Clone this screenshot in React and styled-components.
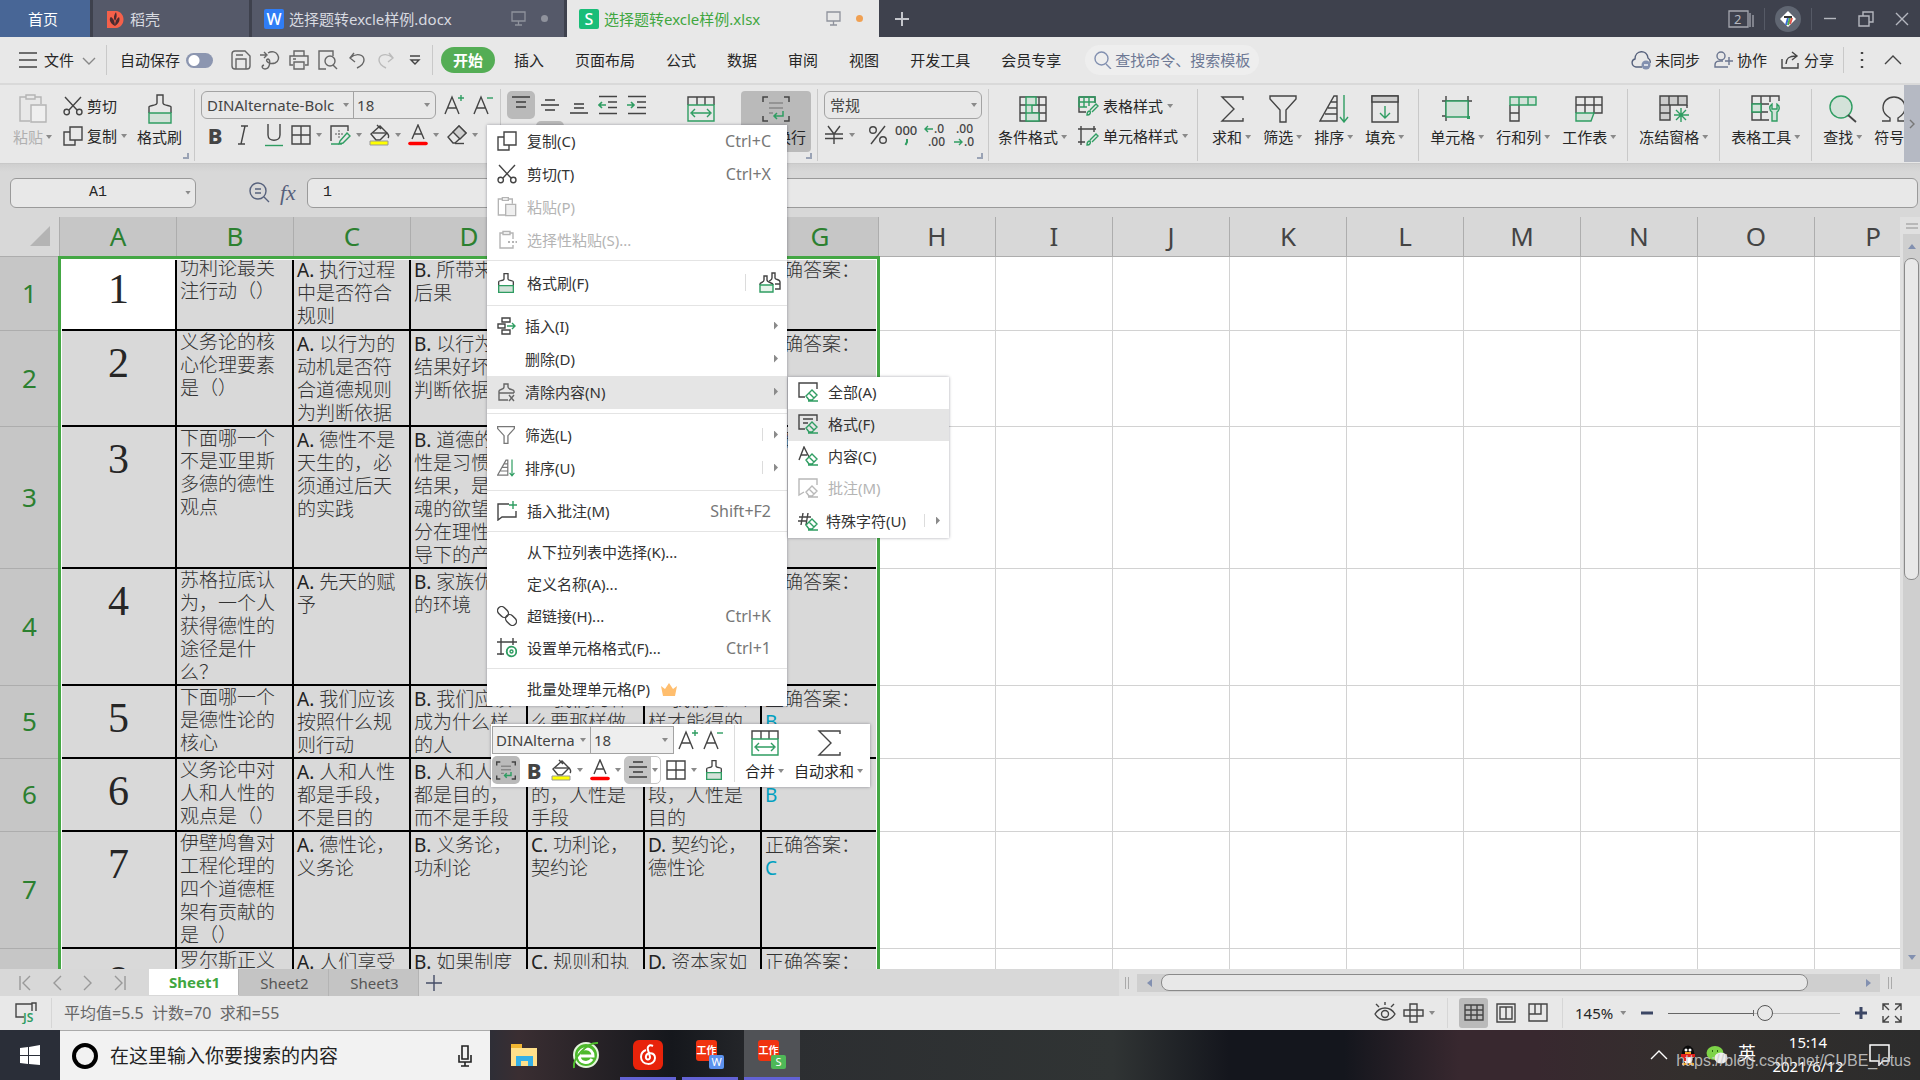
import React from 'react'
import styled, { createGlobalStyle, css } from 'styled-components'

const ink = '#444'
const green = '#2f9d62'
const mint = '#d3e2d9'
const uiFont = `'Noto Sans', 'Noto Sans CJK SC', sans-serif`

const GlobalStyle = createGlobalStyle`
  * {
    box-sizing: border-box;
  }

  body {
    margin: 0;
    overflow: hidden;
    background: #e8e8e8;
    color: #262626;
    font-family: ${uiFont};
    font-size: 15px;
    line-height: 20px;
  }

  button, input, select {
    margin: 0;
    padding: 0;
    border: 0;
    background: none;
    color: inherit;
    font: inherit;
    outline: none;
  }

  svg {
    display: block;
    flex: none;
  }
`

const Window = styled.div`
  position: relative;
  display: flex;
  flex-direction: column;
  height: 100vh;
  overflow: hidden;
`

const Spacer = styled.div`
  flex: 1;
`

const Gap = styled.span`
  flex: none;
  width: ${({ $width }) => $width}px;
`

const Caret = styled.span`
  flex: none;
  width: 6px;
  height: 4px;
  background: #8a8a8a;
  clip-path: polygon(0 0, 100% 0, 50% 100%);
`

const Divider = styled.span`
  flex: none;
  width: 1px;
  height: ${({ $height = 30 }) => $height}px;
  margin: 0 ${({ $gap = 0 }) => $gap}px;
  background: ${({ $color = '#c9c9c9' }) => $color};
`

/* ---------- icons ---------- */

const Icon = ({ w = 20, h = w, color = ink, sw = 1.4, children }) => (
  <svg
    width={w}
    height={h}
    viewBox={`0 0 ${w} ${h}`}
    fill='none'
    stroke={color}
    strokeWidth={sw}
    aria-hidden='true'
  >
    {children}
  </svg>
)

const Glyph = ({ x, y, size, children, fill = ink, weight = 400 }) => (
  <text
    x={x}
    y={y}
    fontSize={size}
    fill={fill}
    stroke='none'
    fontWeight={weight}
    fontFamily='Noto Sans'
  >
    {children}
  </text>
)

const PasteIcon = ({ small }) => (
  <svg
    width={small ? 20 : 28}
    height={small ? 20 : 30}
    viewBox='0 0 28 30'
    fill='none'
    stroke='#b4b4b4'
    strokeWidth={small ? 2 : 1.4}
    aria-hidden='true'
  >
    <path d='M7 3H1v24h10M16 3h6v7M7 1h9v4H7z' />
    <path d='M12 11h15v17H12z' fill='#efefef' />
  </svg>
)

const PasteSpecialIcon = () => (
  <Icon color='#b4b4b4'>
    <path d='M6 3H3v15h13v-3M13 3h3v6M6 1.500h7v3H6z' />
    <path d='M11 12h2M15 12h2M18.500 12h1.500' strokeWidth='2' />
  </Icon>
)

const CutIcon = () => (
  <Icon>
    <path d='M2 1l12 13M18 1L6 14' />
    <circle cx='3.700' cy='16' r='2.700' />
    <circle cx='16.300' cy='16' r='2.700' />
  </Icon>
)

const CopyIcon = () => (
  <Icon>
    <path d='M7 1h12v13H7z' />
    <path d='M7 6H1v13h11v-5' />
  </Icon>
)

const BrushIcon = ({ w = 24, h = 30 }) => (
  <svg
    width={w}
    height={h}
    viewBox='0 0 24 30'
    fill='none'
    stroke={ink}
    strokeWidth={w > 20 ? 1.4 : 2}
    aria-hidden='true'
  >
    <path d='M1 19v-6c0-2 8-1 8-4V1h6v8c0 3 8 2 8 4v6' />
    <path d='M1 19h22v10H1z' fill={mint} stroke={green} />
  </svg>
)

const DoubleBrushIcon = () => (
  <Icon w={22}>
    <path d='M10 9c2-1 3-1 3-3V1h3v5c0 2 5 1 5 4v7h-5M16 12h5' />
    <path d='M1 13v-1c0-2 4-1 4-4V4h3v4c0 3 6 2 6 5' fill='#fff' />
    <path d='M1 13h13v7H1z' fill='#e8f4ec' stroke={green} />
  </Icon>
)

const BordersIcon = () => (
  <Icon>
    <path d='M1 1h18v18H1zM10 1v18M1 10h18' />
  </Icon>
)

const CellStyleIcon = () => (
  <Icon w={21} h={20}>
    <path d='M1 16V1h17v5' />
    <path d='M5 9h8M9 5v8' strokeDasharray='2 1' stroke='#888' />
    <path d='M1 19h11M10 16l7-8 3 3-7 7-4 1z' stroke={green} />
  </Icon>
)

const FillIcon = () => (
  <Icon w={21} h={22}>
    <path d='M2 10l9-8 7 7-7 7H7zM8 1l4 4' />
    <path d='M4 9h14' />
    <path d='M18 9c2 2 2 4 1 5' />
    <path d='M1 17h18v4H1z' fill='#ff0' stroke='#999' strokeWidth='1' />
  </Icon>
)

const FontColorIcon = () => (
  <Icon w={20} h={22}>
    <path d='M4 15L10 1l6 14M6 10h8' />
    <path d='M2 19.500h16' stroke='#f00' strokeWidth='3.600' strokeLinecap='round' />
  </Icon>
)

const EraserIcon = () => (
  <Icon>
    <path d='M1 12L12 1l7 7L8 18H6z' />
    <path d='M6 7l7 7 6-6-7-7z' fill='#cfcfcf' />
    <path d='M8 18.500h9' />
  </Icon>
)

const FontSizeIcon = ({ minus }) => (
  <Icon w={21} h={22}>
    <path d='M1 20L8 3l7 17M4 14h8' />
    <path d={minus ? 'M14 4h6' : 'M14 4h6M17 1v6'} stroke={green} />
  </Icon>
)

const LinesIcon = ({ rows }) => (
  <Icon sw={1.6}>
    {rows.map(([x, y, width]) => (
      <path key={y} d={`M${x} ${y}h${width}`} />
    ))}
  </Icon>
)

const IndentIcon = ({ out }) => (
  <Icon sw={1.6}>
    <path d='M1 1.500h18M10 7h9M10 12.500h9M1 18.500h18' />
    <path
      d={out ? 'M8 10H1M4 7l-3 3 3 3' : 'M0 10h7M4 7l3 3-3 3'}
      stroke={green}
    />
  </Icon>
)

const MergeIcon = () => (
  <Icon w={28} h={26}>
    <path d='M1 9V1h26v8M10 1v8M18 1v8' />
    <path d='M1 9h26v16H1zM5 17h18M8 13l-4 4 4 4M20 13l4 4-4 4' stroke={green} />
  </Icon>
)

const WrapIcon = ({ w = 28, h = 26 }) => (
  <svg
    width={w}
    height={h}
    viewBox='0 0 28 26'
    fill='none'
    stroke={ink}
    strokeWidth={w > 20 ? 1.5 : 2}
    aria-hidden='true'
  >
    <path d='M6 1H1v5M22 1h5v5M6 25H1v-5M22 25h5v-5' />
    <path d='M7 7h14M7 12h14M7 17h4' stroke='#888' />
    <path d='M21 15v5h-9M15 17l-3 3 3 3' stroke={green} />
  </svg>
)

const YenIcon = () => (
  <Icon>
    <path d='M4 1l6 8 6-8M1 9h18M1 13.500h18M10 9v10' />
  </Icon>
)

const PercentIcon = () => (
  <Icon>
    <circle cx='5' cy='5' r='3.300' />
    <circle cx='15' cy='15' r='3.300' />
    <path d='M17 1L3 19' />
  </Icon>
)

const ThousandsIcon = () => (
  <Icon w={24} h={22}>
    <Glyph x='0' y='11' size='13' weight='500'>000</Glyph>
    <path d='M12 15v3l-1.500 3' stroke={green} strokeWidth='2' />
  </Icon>
)

const DecimalIcon = ({ more }) => (
  <Icon w={24} h={24}>
    <Glyph x={more ? 3 : 10} y='10' size='12' weight='500'>
      {more ? '.00' : '.0'}
    </Glyph>
    <Glyph x={more ? 11 : 4} y='23' size='12' weight='500'>
      {more ? '.0' : '.00'}
    </Glyph>
    <path
      d={more ? 'M1 19h8M6 16l3 3-3 3' : 'M9 6H1M4 3L1 6l3 3'}
      stroke={green}
    />
  </Icon>
)

const ConditionalIcon = () => (
  <Icon w={28} h={26}>
    <path d='M1 1h26v24H1zM1 9h26M1 17h26M20 1v24' />
    <path d='M7 1h10v8H7zM7 9h6v8H7zM7 17h13v8H7z' fill={mint} stroke={green} />
  </Icon>
)

const TableStyleIcon = () => (
  <Icon w={21} h={20}>
    <path d='M1 1h16v6M1 1v15h7' />
    <path d='M1 1h16v5H1zM1 11h8M6 1v10M11 1v9M1 6v5' stroke={green} />
    <path d='M9 19c0-3 1-4 3-4 1 2 0 4-3 4zM12 14l6-6 2 2-6 6' stroke={green} />
  </Icon>
)

const CellStylesIcon = () => (
  <Icon w={21} h={20}>
    <path d='M0 3h18M3 0v19M16 0v6M0 16h7' />
    <path d='M9 19c0-3 1-4 3-4 1 2 0 4-3 4zM12 14l6-6 2 2-6 6' stroke={green} />
  </Icon>
)

const SumIcon = () => (
  <Icon w={24} h={26}>
    <path d='M23 4V1H2l12 12L2 25h21v-3' />
  </Icon>
)

const FilterIcon = ({ w = 28, h = 28 }) => (
  <svg
    width={w}
    height={h}
    viewBox='0 0 28 28'
    fill='none'
    stroke={w > 20 ? ink : '#777'}
    strokeWidth={w > 20 ? 1.4 : 2}
    aria-hidden='true'
  >
    <path d='M1 1h26v3l-10 11v12h-6V15L1 4z' />
  </svg>
)

const SortIcon = ({ w = 30, h = 28 }) => (
  <svg
    width={w}
    height={h}
    viewBox='0 0 30 28'
    fill='none'
    stroke={w > 20 ? ink : '#777'}
    strokeWidth={w > 20 ? 1.4 : 2}
    aria-hidden='true'
  >
    <path d='M18 1v25H1L15 1zM9 13h9M6 19h12M12 7h6' />
    <path d='M25 0v27M21 22l4 5 4-5' stroke={green} />
  </svg>
)

const FillDownIcon = () => (
  <Icon w={28} h={28}>
    <path d='M1 1h26v26H1z' />
    <path d='M1 1h26v6H1z' fill='#ccc' />
    <path d='M14 11v12M9 18l5 5 5-5' stroke={green} />
  </Icon>
)

const CellsIcon = () => (
  <Icon w={30} h={26}>
    <path d='M0 5h30M0 20h5M4 0v25M26 0v20' />
    <path d='M4 5h22v16H4z' fill={mint} stroke={green} />
    <path d='M25 20h3v3h-3z' fill={green} stroke='none' />
  </Icon>
)

const RowColIcon = () => (
  <Icon w={28} h={26}>
    <path d='M1 9v16h9V9M1 17h9' />
    <path d='M1 1h26v8H1zM10 1v8M19 1v8' stroke={green} fill={mint} />
  </Icon>
)

const WorksheetIcon = () => (
  <Icon w={28} h={26}>
    <path d='M1 17V1h26v16h-9M1 9h26M10 1v16M19 1v16' />
    <path d='M1 17h18l-3 8H1z' fill={mint} stroke={green} />
  </Icon>
)

const FreezeIcon = () => (
  <Icon w={30} h={28}>
    <path d='M1 1h27v9H11v15H1z' fill='#ccc' />
    <path d='M10 1v9M19 1v9M1 10h10M1 18h10M28 10v3' />
    <path d='M22 13v14M15 20h15M17 15l10 10M27 15L17 25' stroke={green} />
  </Icon>
)

const TableToolIcon = () => (
  <Icon w={30} h={28}>
    <path d='M28 6V1H1v24h17M1 9h17M10 1v24M19 1v6M1 17h16' />
    <path d='M1 9h9v8H1z' fill={mint} stroke={green} />
    <path
      d='M21 9c-3 2-3 6 0 8v9h5v-9c3-2 3-6 0-8v5h-5z'
      fill={mint}
      stroke={green}
    />
  </Icon>
)

const FindIcon = () => (
  <Icon w={28} h={28}>
    <circle cx='12' cy='12' r='11' fill={mint} stroke={green} />
    <path d='M19 20l8 7' strokeWidth='1.800' />
  </Icon>
)

const OmegaIcon = () => (
  <Icon w={28} h={26}>
    <path d='M2 25h8v-3C5 19 3 16 3 12 3 5 8 1 14 1s11 4 11 11c0 4-2 7-7 10v3h8' />
  </Icon>
)

const ClearIcon = () => (
  <Icon color='#666'>
    <path d='M2 11V9c0-2 5-1 5-4V2h4v3c0 3 6 2 6 4v2M2 11v7h9M2 11h15' />
    <path d='M12 13l5 6M17 13l-5 6' />
  </Icon>
)

const InsertIcon = () => (
  <Icon>
    <path d='M5 2h8v4H5zM1 8h7v4H1zM5 14h8v4H5z' />
    <path d='M10 10h8M15 7l3 3-3 3' stroke={green} />
  </Icon>
)

const CommentIcon = () => (
  <Icon>
    <path d='M12 3H1v16l4-3h14v-6' />
    <path d='M12 4h8M16 0v8' stroke={green} />
  </Icon>
)

const LinkIcon = () => (
  <Icon>
    <rect x='-6' y='-4' width='12' height='8' rx='4' transform='translate(6 6) rotate(45)' />
    <rect x='-6' y='-4' width='12' height='8' rx='4' transform='translate(14 14) rotate(45)' />
  </Icon>
)

const FormatCellsIcon = () => (
  <Icon>
    <path d='M0 4h20M4 0v17M16 0v7M0 16h7' />
    <circle cx='14.500' cy='13.500' r='4.800' stroke={green} strokeWidth='1.800' />
    <circle cx='14.500' cy='13.500' r='1.500' stroke={green} />
  </Icon>
)

const EraseIcon = ({ kind, muted }) => {
  const stroke = muted ? '#b8b8b8' : ink
  const accent = muted ? '#b8b8b8' : green
  return (
    <Icon color={stroke}>
      {kind === 'box' && <path d='M19 7V1H1v14h6' />}
      {kind === 'format' && <path d='M19 7V1H1v14h6M5 5h10M5 9h5' />}
      {kind === 'text' && <path d='M1 14L6 1l5 10M3 9h6' />}
      {kind === 'note' && <path d='M19 7V1H1v16l5-3' />}
      {kind === 'hash' && <path d='M5 2L3 14M10 2L8 14M1 6h12M0 10h8' />}
      <path d='M8 14l6-6 5 5-5 5h-3zM11 11l5 5M10 19h10' stroke={accent} />
    </Icon>
  )
}

/* ---------- title bar ---------- */

const TitleBar = styled.header`
  display: flex;
  flex: none;
  height: 37px;
  background: #3e414d;
  color: #d8dae0;
`

const WindowTab = styled.button`
  display: flex;
  align-items: center;
  flex: none;
  gap: 5px;
  width: ${({ $width }) => $width}px;
  margin-right: 3px;
  padding: 0 16px 0 12px;
  background: #555969;
  text-align: left;

  ${({ $kind }) =>
    $kind === 'home' &&
    css`
      justify-content: center;
      background: #486696;
      color: #fff;
    `}
  ${({ $kind }) =>
    $kind === 'active' &&
    css`
      margin-right: 0;
      background: #e8e8e8;
      color: #40a640;
    `}
`

const AppBadge = styled.span`
  display: grid;
  place-items: center;
  width: 20px;
  height: 20px;
  border-radius: 2px;
  background: ${({ $color }) => $color};
  color: #fff;
  font-size: 16px;
  font-weight: 500;
`

const Dot = styled.span`
  width: 7px;
  height: 7px;
  margin-left: 10px;
  border-radius: 50%;
  background: ${({ $color }) => $color};
`

const NewTab = styled.button`
  display: grid;
  place-items: center;
  width: 46px;
`

const WindowControls = styled.div`
  display: flex;
  align-items: center;
  color: #c0c2ca;
`

const ControlButton = styled.button`
  display: grid;
  place-items: center;
  width: 36px;
  height: 36px;
`

const Avatar = styled.button`
  display: grid;
  place-items: center;
  width: 26px;
  height: 26px;
  border-radius: 50%;
  background: #606672;
`

const MonitorIcon = () => (
  <Icon w={15} h={15} color='#8f929c' sw={1.3}>
    <path d='M1 1h13v9H1zM7.500 10v4M4 14h7' />
  </Icon>
)

const TitleTabs = () => (
  <TitleBar>
    <WindowTab $width={90} $kind='home'>首页</WindowTab>
    <WindowTab $width={156}>
      <Icon w={20}>
        <path d='M2 2h9c10 1 10 16 0 17H2z' fill='#f5604a' stroke='none' />
        <path d='M10 17C4 14 4 9 6 8c2 1 4 4 4 9zM10 17c5-3 5-7 4-9-3 2-4 5-4 9zM10 12c-2-3-1-6 1-9 1 3 1 6-1 9z' fill='#4a2b30' stroke='none' />
      </Icon>
      稻壳
    </WindowTab>
    <WindowTab $width={312}>
      <AppBadge $color='#2f7df6'>W</AppBadge>
      选择题转excle样例.docx
      <Spacer />
      <MonitorIcon />
      <Dot $color='#8f929c' />
    </WindowTab>
    <WindowTab $width={312} $kind='active'>
      <AppBadge $color='#19bd78'>S</AppBadge>
      选择题转excle样例.xlsx
      <Spacer />
      <MonitorIcon />
      <Dot $color='#f0a052' />
    </WindowTab>
    <NewTab aria-label='新建'>
      <Icon w={18} color='#c4c6cc' sw={2}>
        <path d='M9 2v14M2 9h14' />
      </Icon>
    </NewTab>
    <Spacer />
    <WindowControls>
      <Icon w={26} h={20} color='#a5a7af' sw={1.3}>
        <path d='M1 2h19v16H1zM22 4v14M25 6v12' />
        <Glyph x='6' y='15' size='13' fill='#b5b7bf'>2</Glyph>
      </Icon>
      <Divider $height={22} $gap={10} $color='#565a66' />
      <Avatar aria-label='账号'>
        <Icon w={18} sw={2}>
          <path d='M9 1l8 8-8 8-8-8z' fill='#fff' stroke='none' />
          <path d='M7 15l2-7' stroke='#3b6ad8' />
          <path d='M9 15l2-7' stroke='#4cae4c' />
          <path d='M11 14l2-6' stroke='#e0524a' />
          <path d='M5 7h8' stroke='#333' />
        </Icon>
      </Avatar>
      <Gap $width={10} />
      <Divider $height={22} $color='#565a66' />
      <ControlButton aria-label='最小化'>
        <Icon w={14} color='#b5b7bf'><path d='M1 6.500h12' /></Icon>
      </ControlButton>
      <ControlButton aria-label='还原'>
        <Icon w={16} color='#b5b7bf'>
          <path d='M1 5h10v10H1zM5 5V1h10v10h-4' />
        </Icon>
      </ControlButton>
      <ControlButton aria-label='关闭'>
        <Icon w={14} color='#b5b7bf'><path d='M1 1l12 12M13 1L1 13' /></Icon>
      </ControlButton>
    </WindowControls>
  </TitleBar>
)

/* ---------- menu bar ---------- */

const MenuBar = styled.nav`
  display: flex;
  align-items: center;
  flex: none;
  height: 48px;
  padding: 0 17px 0 19px;
  border-bottom: 2px solid #d9d9d9;
`

const FileButton = styled.button`
  display: flex;
  align-items: center;
  gap: 7px;
  margin-right: 10px;
`

const AutoSave = styled.label`
  display: flex;
  align-items: center;
  gap: 6px;
  margin: 0 18px 0 13px;
`

const Toggle = styled.input`
  appearance: none;
  width: 27px;
  height: 15px;
  border-radius: 8px;
  background: radial-gradient(circle at 8px 50%, #fff 5px, #8c96b0 6px);
`

const QuickTools = styled.div`
  display: flex;
  gap: 9px;
  margin-right: 7px;
`

const QuickButton = styled.button`
  display: grid;
  place-items: center;
  width: 20px;
  height: 24px;
`

const RibbonTabs = styled.div`
  display: flex;
  align-items: center;
  gap: 31px;
  margin: 0 24px 0 8px;
`

const RibbonTab = styled.button`
  ${({ $active }) =>
    $active &&
    css`
      width: 54px;
      height: 26px;
      margin-right: -12px;
      border-radius: 13px;
      background: #54ad55;
      color: #fff;
      font-weight: 700;
    `}
`

const CommandSearch = styled.label`
  display: flex;
  align-items: center;
  gap: 3px;
  width: 174px;
  height: 30px;
  padding: 0 9px;
  border-radius: 15px;
  background: #eee;

  input {
    width: 137px;
  }

  input::placeholder {
    color: #6d7894;
    opacity: 1;
  }
`

const ShareButton = styled.button`
  display: flex;
  align-items: center;
  gap: 4px;
  margin-right: ${({ $after = 14 }) => $after}px;
`

const tabNames = ['开始', '插入', '页面布局', '公式', '数据', '审阅', '视图', '开发工具', '会员专享']

const MainMenu = () => (
  <MenuBar>
    <FileButton>
      <Icon w={18}><path d='M0 2h18M0 9h18M0 16h18' /></Icon>
      文件
      <Icon w={15} color='#888'><path d='M2 5l6 6 6-6' /></Icon>
    </FileButton>
    <Divider />
    <AutoSave>
      自动保存
      <Toggle type='checkbox' />
    </AutoSave>
    <QuickTools>
      <QuickButton aria-label='保存'>
        <Icon color='#666'>
          <path d='M1 4c0-2 1-3 3-3h10l5 5v10c0 2-1 3-3 3H4c-2 0-3-1-3-3zM5 19V9h10v10M5 5h7' />
        </Icon>
      </QuickButton>
      <QuickButton aria-label='输出为PDF'>
        <Icon color='#666'>
          <path d='M0 5h6M4 2l3 3-3 3M8 3c8-5 15 6 7 10-6 2-11-3-7-4 3 1 2 10-3 10-3 0-4-3-1-4' />
        </Icon>
      </QuickButton>
      <QuickButton aria-label='打印'>
        <Icon color='#666'>
          <path d='M5 6V1h10v5M4 15H1V6h18v9h-3M5 12h10v7H5zM4 9h3' />
        </Icon>
      </QuickButton>
      <QuickButton aria-label='打印预览'>
        <Icon color='#666'>
          <path d='M8 19H1V1h14v5' />
          <circle cx='12' cy='11' r='5' />
          <path d='M15 15l4 4' />
        </Icon>
      </QuickButton>
      <QuickButton aria-label='撤销'>
        <Icon w={18} color='#666'>
          <path d='M6 2L2 7l5 4M2 7c7-6 14-3 14 2 0 3-3 6-7 8' />
        </Icon>
      </QuickButton>
      <QuickButton aria-label='恢复'>
        <Icon w={18} color='#bbb'>
          <path d='M12 2l4 5-5 4M16 7C9 1 2 4 2 9c0 3 3 6 7 8' />
        </Icon>
      </QuickButton>
      <QuickButton aria-label='更多'>
        <Icon w={12}><path d='M1 2h10M2 6l4 4 4-4z' /></Icon>
      </QuickButton>
    </QuickTools>
    <Divider />
    <RibbonTabs>
      {tabNames.map((name, i) => (
        <RibbonTab key={name} $active={i === 0}>{name}</RibbonTab>
      ))}
    </RibbonTabs>
    <CommandSearch>
      <Icon w={18} color='#8290b0'>
        <circle cx='7.500' cy='7.500' r='6.500' />
        <path d='M12 13l5 5' />
      </Icon>
      <input aria-label='查找命令' placeholder='查找命令、搜索模板' />
    </CommandSearch>
    <Spacer />
    <ShareButton>
      <Icon color='#56617c'>
        <path d='M11 17H5c-5-1-5-7-1-8C4 0 16-1 17 8c3 2 2 5 2 5' />
        <circle cx='15' cy='15' r='4.500' fill='#8290b0' stroke='none' />
        <path d='M13 15h4' stroke='#fff' />
      </Icon>
      未同步
    </ShareButton>
    <ShareButton>
      <Icon w={19} h={18} color='#6b7690'>
        <circle cx='7' cy='5' r='4' />
        <path d='M11 16H1v-2c0-5 5-4 8-4M15 6v8M11 10h8M11 16h3' />
      </Icon>
      协作
    </ShareButton>
    <ShareButton $after={9}>
      <Icon w={19} h={18}>
        <path d='M1 8v9h16v-5M5 13c0-6 3-8 10-8M11 1l5 4-5 4' />
      </Icon>
      分享
    </ShareButton>
    <Divider $height={26} />
    <Gap $width={8} />
    <QuickButton aria-label='更多选项'>
      <Icon w={4} h={18}>
        <path d='M2 1v2M2 8v2M2 15v2' strokeWidth='2.400' />
      </Icon>
    </QuickButton>
    <Gap $width={11} />
    <QuickButton aria-label='收起功能区'>
      <Icon w={18} h={12}><path d='M1 10l8-8 8 8' /></Icon>
    </QuickButton>
  </MenuBar>
)

/* ---------- ribbon ---------- */

const RibbonBar = styled.div`
  display: flex;
  flex: none;
  height: 79px;
  border-bottom: 1px solid #c8c8c8;
`

const RibbonScroll = styled.div`
  display: flex;
  flex: 1;
  min-width: 0;
  padding: 4px 0 2px;
  overflow: hidden;
`

const RibbonMore = styled.button`
  display: grid;
  place-items: center;
  width: 16px;
  margin-bottom: 1px;
  background: #b5b9c3;
`

const RibbonGroup = styled.section`
  position: relative;
  display: flex;
  flex: none;
  gap: ${({ $gap = 12 }) => $gap}px;
  padding: 2px ${({ $pad = 11 }) => $pad}px 0;
  border-right: 1px solid #c9c9c9;

  &:last-child {
    border-right: 0;
  }
`

/* dialog launcher in the corner of a group */
const Corner = styled.button`
  position: absolute;
  right: 5px;
  bottom: 2px;
  width: 6px;
  height: 6px;
  border: solid #9aa3b5;
  border-width: 0 2px 2px 0;
`

const BigButton = styled.button`
  display: flex;
  flex-direction: column;
  align-items: center;
  flex: none;
  height: 61px;
  padding: 0 ${({ $pad = 0 }) => $pad}px;
  border-radius: 4px;
  color: ${({ $muted }) => ($muted ? '#b0b0b0' : 'inherit')};
  background: ${({ $on }) => ($on ? '#bababa' : 'none')};
`

const IconBox = styled.span`
  display: grid;
  place-items: center;
  height: 36px;
`

const Label = styled.span`
  display: flex;
  align-items: center;
  gap: 3px;
  white-space: nowrap;
`

const Stack = styled.div`
  display: flex;
  flex-direction: column;
  gap: ${({ $gap = 2 }) => $gap}px;
  margin-right: ${({ $after = 0 }) => $after}px;
`

const ToolRow = styled.div`
  display: flex;
  align-items: center;
  gap: ${({ $gap = 0 }) => $gap}px;
  height: 28px;
`

const ToolButton = styled.button`
  display: flex;
  align-items: center;
  justify-content: center;
  flex: none;
  width: ${({ $width = 28 }) => $width}px;
  height: 28px;
  border-radius: 5px;
  background: ${({ $on }) => ($on ? '#bababa' : 'none')};
`

const SplitButton = styled.button`
  display: flex;
  align-items: center;
  flex: none;
  gap: 5px;
  width: ${({ $width = 39 }) => $width}px;
  height: 28px;
`

const LineButton = styled.button`
  display: flex;
  align-items: center;
  gap: 4px;
  height: 30px;
  white-space: nowrap;
`

const Letter = styled.span`
  color: ${ink};
  font-size: 22px;
  font-weight: 800;
  line-height: 24px;
`

const Combo = styled.div`
  display: flex;
  height: 28px;
  border: 1px solid #a3a3a3;
  border-radius: ${({ $square }) => ($square ? 0 : 6)}px;
  color: #444;
  background: ${({ $square }) => ($square ? '#eee' : 'none')};
`

const Field = styled.label`
  display: flex;
  align-items: center;
  width: ${({ $width }) => $width}px;
  padding: 0 4px 0 ${({ $left = 5 }) => $left}px;

  & + & {
    border-left: 1px solid #a3a3a3;
    padding: 0 5px 0 3px;
  }

  select {
    flex: 1;
    min-width: 0;
    height: 100%;
    appearance: none;
  }
`

const FontFields = ({ name, widths, square, left }) => (
  <Combo $square={square}>
    <Field $width={widths[0]} $left={left}>
      <select aria-label='字体'>
        <option>{name}</option>
      </select>
      <Caret />
    </Field>
    <Field $width={widths[1]}>
      <select aria-label='字号'>
        <option>18</option>
      </select>
      <Caret />
    </Field>
  </Combo>
)

const Big = ({ icon, label, caret = true, ...rest }) => (
  <BigButton {...rest}>
    <IconBox>{icon}</IconBox>
    <Label>
      {label}
      {caret && <Caret />}
    </Label>
  </BigButton>
)

const Split = ({ label, width, children }) => (
  <SplitButton aria-label={label} $width={width}>
    {children}
    <Caret />
  </SplitButton>
)

const Ribbon = () => (
  <RibbonBar>
    <RibbonScroll>
      <RibbonGroup $pad={12} $gap={10}>
        <Big $muted $pad={1} icon={<PasteIcon />} label='粘贴' />
        <Stack $gap={0}>
          <LineButton><CutIcon />剪切</LineButton>
          <LineButton><CopyIcon />复制<Caret /></LineButton>
        </Stack>
        <Big icon={<BrushIcon />} label='格式刷' caret={false} />
        <Corner aria-label='剪贴板设置' />
      </RibbonGroup>
      <RibbonGroup $pad={6}>
        <Stack>
          <ToolRow $gap={8}>
            <FontFields name='DINAlternate-Bolc' widths={[151, 82]} />
            <FontSizeIcon />
            <FontSizeIcon minus />
          </ToolRow>
          <ToolRow>
            <ToolButton aria-label='加粗'><Letter>B</Letter></ToolButton>
            <ToolButton aria-label='倾斜'>
              <Icon><path d='M8 1h7M5 19h7M12 1L8 19' /></Icon>
            </ToolButton>
            <ToolButton aria-label='下划线' $width={34}>
              <Icon h={23}>
                <path d='M4 0v11c0 7 12 7 12 0V0' />
                <path d='M1 21.500h18' stroke={green} />
              </Icon>
            </ToolButton>
            <Split label='边框'><BordersIcon /></Split>
            <Split label='单元格样式'><CellStyleIcon /></Split>
            <Split label='填充颜色'><FillIcon /></Split>
            <Split label='字体颜色'><FontColorIcon /></Split>
            <Split label='清除'><EraserIcon /></Split>
          </ToolRow>
        </Stack>
      </RibbonGroup>
      <RibbonGroup $pad={6} $gap={6}>
        <Stack $after={9}>
          <ToolRow $gap={1}>
            <ToolButton $on aria-label='顶端对齐'>
              <LinesIcon rows={[[1, 2, 18], [5, 7, 10], [5, 12, 10]]} />
            </ToolButton>
            <ToolButton aria-label='垂直居中'>
              <LinesIcon rows={[[5, 5, 10], [1, 10, 18], [5, 15, 10]]} />
            </ToolButton>
            <ToolButton aria-label='底端对齐'>
              <LinesIcon rows={[[5, 9, 10], [5, 13, 10], [1, 18, 18]]} />
            </ToolButton>
            <ToolButton aria-label='减少缩进'><IndentIcon out /></ToolButton>
            <ToolButton aria-label='增加缩进'><IndentIcon /></ToolButton>
          </ToolRow>
          <ToolRow $gap={1}>
            <ToolButton aria-label='左对齐'>
              <LinesIcon rows={[[1, 3, 18], [1, 10, 12], [1, 17, 18]]} />
            </ToolButton>
            <ToolButton $on aria-label='水平居中'>
              <LinesIcon rows={[[1, 3, 18], [4, 10, 12], [1, 17, 18]]} />
            </ToolButton>
            <ToolButton aria-label='右对齐'>
              <LinesIcon rows={[[1, 3, 18], [7, 10, 12], [1, 17, 18]]} />
            </ToolButton>
          </ToolRow>
        </Stack>
        <Big icon={<MergeIcon />} label='合并居中' />
        <Big $on $pad={5} icon={<WrapIcon />} label='自动换行' caret={false} />
        <Corner aria-label='对齐设置' />
      </RibbonGroup>
      <RibbonGroup $pad={6}>
        <Stack>
          <Combo>
            <Field $width={156}>
              <select aria-label='数字格式'>
                <option>常规</option>
              </select>
              <Caret />
            </Field>
          </Combo>
          <ToolRow $gap={1}>
            <Split label='货币'><YenIcon /></Split>
            <ToolButton aria-label='百分比'><PercentIcon /></ToolButton>
            <ToolButton aria-label='千位分隔'><ThousandsIcon /></ToolButton>
            <ToolButton aria-label='减少小数位'><DecimalIcon /></ToolButton>
            <ToolButton aria-label='增加小数位'><DecimalIcon more /></ToolButton>
          </ToolRow>
        </Stack>
        <Corner aria-label='数字设置' />
      </RibbonGroup>
      <RibbonGroup $pad={9} $gap={11}>
        <Big icon={<ConditionalIcon />} label='条件格式' />
        <Stack $gap={0}>
          <LineButton><TableStyleIcon />表格样式<Caret /></LineButton>
          <LineButton><CellStylesIcon />单元格样式<Caret /></LineButton>
        </Stack>
      </RibbonGroup>
      <RibbonGroup $pad={14}>
        <Big icon={<SumIcon />} label='求和' />
        <Big icon={<FilterIcon />} label='筛选' />
        <Big icon={<SortIcon />} label='排序' />
        <Big icon={<FillDownIcon />} label='填充' />
      </RibbonGroup>
      <RibbonGroup>
        <Big icon={<CellsIcon />} label='单元格' />
        <Big icon={<RowColIcon />} label='行和列' />
        <Big icon={<WorksheetIcon />} label='工作表' />
      </RibbonGroup>
      <RibbonGroup>
        <Big icon={<FreezeIcon />} label='冻结窗格' />
      </RibbonGroup>
      <RibbonGroup>
        <Big icon={<TableToolIcon />} label='表格工具' />
      </RibbonGroup>
      <RibbonGroup>
        <Big icon={<FindIcon />} label='查找' />
        <Big icon={<OmegaIcon />} label='符号' />
      </RibbonGroup>
    </RibbonScroll>
    <RibbonMore aria-label='更多功能'>
      <Icon w={8} h={12} color='#777'><path d='M2 2l4 4-4 4' /></Icon>
    </RibbonMore>
  </RibbonBar>
)

/* ---------- formula bar ---------- */

const FormulaBar = styled.div`
  display: flex;
  align-items: center;
  flex: none;
  height: 53px;
  padding: 4px 2px 0 10px;
  background: linear-gradient(#cfcfcf, #d8d8d8 8px);
`

const NameBox = styled.label`
  display: flex;
  align-items: center;
  width: 186px;
  height: 30px;
  padding-right: 4px;
  border: 1px solid #9a9a9a;
  border-radius: 6px;
  background: #e8e8e8;

  input {
    flex: 1;
    min-width: 0;
    text-align: center;
    font-family: 'Liberation Mono', monospace;
  }
`

const FormulaTools = styled.div`
  display: flex;
  align-items: center;
  gap: 10px;
  width: 111px;
  padding-left: 53px;
`

const Fx = styled.button`
  color: #56617c;
  font: italic 22px 'Liberation Serif', serif;
`

const FormulaInput = styled.input`
  flex: 1;
  height: 30px;
  padding: 0 15px;
  border: 1px solid #9a9a9a;
  border-radius: 6px;
  background: #e8e8e8;
  font-family: 'Liberation Mono', monospace;
`

/* ---------- sheet ---------- */

const SheetArea = styled.main`
  display: flex;
  flex: 1;
  min-height: 0;
  background: #d8d8d8;
`

const GridView = styled.div`
  position: relative;
  flex: 1;
  min-width: 0;
  overflow: hidden;
  background: #fff;
`

const Grid = styled.table`
  width: 100%;
  table-layout: fixed;
  border-collapse: separate;
  border-spacing: 0;

  .head {
    width: 60px;
  }

  .cell {
    width: 117px;
  }
`

const HeadCell = styled.th`
  height: ${({ $height }) => $height}px;
  padding: 0 0 2px;
  border: solid #adadad;
  border-width: 0 1px 1px 0;
  background: ${({ $picked }) => ($picked ? '#c6c6c6' : '#d8d8d8')};
  color: ${({ $picked }) => ($picked ? '#2c8030' : '#444')};
  font-size: 26px;
  line-height: 30px;
  font-weight: 400;
`

const CornerCell = styled(HeadCell)`
  svg {
    margin: 2px 0 0 29px;
  }
`

const Cell = styled.td`
  padding: 0;
  vertical-align: top;
  border: solid #d2d2d2;
  border-width: 0 1px 1px 0;

  ${({ $picked }) =>
    $picked &&
    css`
      border-width: 0 2px 2px 0;
      border-color: #000;
      background: #d9d9d9;
    `}
  ${({ $current }) => $current && 'background: #fff;'}
`

const CellText = styled.div`
  padding: ${({ $top }) => $top}px 0 0 3px;
  color: #333;
  font-size: 19px;
  font-weight: 300;
  line-height: 23px;
  white-space: pre;
  overflow: hidden;

  p {
    margin: 0;
  }

  b {
    font-weight: 400;
    color: #222;
  }
`

const AnswerKey = styled.p`
  color: #00a0c0;
  font-weight: 400;
`

const CellNumber = styled.div`
  padding: 1px 0 0 2px;
  color: #262626;
  font-family: 'Liberation Serif', serif;
  font-size: 42px;
  line-height: 62px;
  text-align: center;
`

const SelectionFrame = styled.div`
  position: absolute;
  top: 39px;
  bottom: -4px;
  left: 58px;
  width: 822px;
  border: 3px solid #44a744;
  box-shadow: inset 0 0 0 1px #fff;
  pointer-events: none;
`

const VScroll = styled.div`
  display: flex;
  flex-direction: column;
  align-items: center;
  width: 20px;
  padding-left: 3px;
  background: #e0e0e0;
`

const VTrack = styled.div`
  display: flex;
  flex-direction: column;
  align-items: center;
  flex: 1;
  width: 100%;
  background: #cfcfcf;
`

const SplitGrip = styled.div`
  display: grid;
  place-items: center;
  width: 17px;
  height: 17px;
`

const VThumb = styled.div`
  width: 15px;
  height: 322px;
  border: 1px solid #8a8a8a;
  border-radius: 7px;
  background: #e8e8e8;
`

const ScrollArrow = styled.button`
  display: grid;
  place-items: center;
  width: 24px;
  height: 24px;
`

const columns = 'ABCDEFGHIJKLMNOP'.split('')
const answer = '正确答案：'

const rows = [
  {
    h: 74,
    cells: ['功利论最关\n注行动（）', 'A. 执行过程\n中是否符合\n规则', 'B. 所带来的\n后果', '', '', answer],
  },
  {
    h: 96,
    cells: ['义务论的核\n心伦理要素\n是（）', 'A. 以行为的\n动机是否符\n合道德规则\n为判断依据', 'B. 以行为的\n结果好坏为\n判断依据', '', '', answer],
  },
  {
    h: 142,
    cells: [
      '下面哪一个\n不是亚里斯\n多德的德性\n观点',
      'A. 德性不是\n天生的，必\n须通过后天\n的实践',
      'B. 道德的德\n性是习惯的\n结果，是灵\n魂的欲望部\n分在理性指\n导下的产物',
      '',
      '',
      answer,
    ],
  },
  {
    h: 117,
    cells: ['苏格拉底认\n为，一个人\n获得德性的\n途径是什\n么？', 'A. 先天的赋\n予', 'B. 家族优越\n的环境', '', '', answer],
  },
  {
    h: 73,
    key: 'B',
    cells: ['下面哪一个\n是德性论的\n核心', 'A. 我们应该\n按照什么规\n则行动', 'B. 我们应该\n成为什么样\n的人', 'C. 我们为什\n么要那样做', 'D. 我们怎么\n样才能得的', answer],
  },
  {
    h: 73,
    key: 'B',
    cells: ['义务论中对\n人和人性的\n观点是（）', 'A. 人和人性\n都是手段，\n不是目的', 'B. 人和人性\n都是目的，\n而不是手段', 'C. 人是目的\n的，人性是\n手段', 'D. 人是手段\n段，人性是\n目的', answer],
  },
  {
    h: 117,
    key: 'C',
    cells: ['伊壁鸠鲁对\n工程伦理的\n四个道德框\n架有贡献的\n是（）', 'A. 德性论，\n义务论', 'B. 义务论，\n功利论', 'C. 功利论，\n契约论', 'D. 契约论，\n德性论', answer],
  },
  {
    h: 96,
    cells: ['罗尔斯正义', 'A. 人们享受', 'B. 如果制度', 'C. 规则和执', 'D. 资本家如', answer],
  },
]

const QuestionCell = ({ text, col, keyLetter }) => (
  <Cell $picked>
    <CellText $top={col === 0 ? 0 : 2}>
      {text.split('\n').map((line, i) =>
        /^[A-D]\./.test(line) ? (
          <p key={i}>
            <b>{line.slice(0, 2)}</b>
            {line.slice(2)}
          </p>
        ) : (
          <p key={i}>{line}</p>
        )
      )}
      {col === 5 && keyLetter && <AnswerKey>{keyLetter}</AnswerKey>}
    </CellText>
  </Cell>
)

const Spreadsheet = () => (
  <SheetArea>
    <GridView>
      <Grid>
        <colgroup>
          <col className='head' />
          {columns.map((c) => (
            <col key={c} className='cell' />
          ))}
        </colgroup>
        <thead>
          <tr>
            <CornerCell $height={40} aria-label='全选'>
              <Icon w={22}>
                <path d='M21 0v20H1z' fill='#b4b4b4' stroke='none' />
              </Icon>
            </CornerCell>
            {columns.map((c, i) => (
              <HeadCell key={c} scope='col' $height={40} $picked={i < 7}>
                {c}
              </HeadCell>
            ))}
          </tr>
        </thead>
        <tbody>
          {rows.map((row, r) => (
            <tr key={r}>
              <HeadCell scope='row' $height={row.h} $picked>
                {r + 1}
              </HeadCell>
              <Cell $picked $current={r === 0}>
                <CellNumber>{r + 1}</CellNumber>
              </Cell>
              {row.cells.map((text, i) => (
                <QuestionCell key={i} col={i} text={text} keyLetter={row.key} />
              ))}
              {columns.slice(7).map((c) => (
                <Cell key={c} />
              ))}
            </tr>
          ))}
        </tbody>
      </Grid>
      <SelectionFrame />
    </GridView>
    <VScroll>
      <SplitGrip>
        <Icon w={12} h={6} color='#aaa'><path d='M0 1h12M0 5h12' /></Icon>
      </SplitGrip>
      <VTrack>
        <ScrollArrow aria-label='向上'>
          <Icon w={8} h={5}><path d='M0 5l4-5 4 5z' fill='#8290b0' stroke='none' /></Icon>
        </ScrollArrow>
        <VThumb />
        <Spacer />
        <ScrollArrow aria-label='向下'>
          <Icon w={8} h={5}><path d='M0 0l4 5 4-5z' fill='#8290b0' stroke='none' /></Icon>
        </ScrollArrow>
      </VTrack>
    </VScroll>
  </SheetArea>
)

/* ---------- sheet tabs and status bar ---------- */

const SheetBar = styled.div`
  display: flex;
  flex: none;
  height: 27px;
  background: #d8d8d8;
`

const SheetNav = styled.div`
  display: flex;
  align-items: center;
  justify-content: space-between;
  flex: none;
  width: 149px;
  padding: 0 22px 0 18px;
`

const SheetTab = styled.button`
  flex: none;
  width: 90px;
  padding-left: 2px;
  border-right: 1px solid #b4b4b4;
  background: #c4c4c4;
  color: #555;

  ${({ $active }) =>
    $active &&
    css`
      margin-bottom: 1px;
      background: #fff;
      color: #40a640;
      font-weight: 700;
    `}
`

const NewSheet = styled.button`
  display: grid;
  place-items: center;
  width: 29px;
`

const HScroll = styled.div`
  display: flex;
  align-items: center;
  flex: 0 0 801px;
  gap: 8px;
  padding: 0 28px 0 6px;
  background: #e0e0e0;
`

const HTrack = styled.div`
  display: flex;
  align-items: center;
  flex: 1;
  height: 18px;
  background: #cfcfcf;
`

const HThumb = styled.div`
  width: 647px;
  height: 17px;
  border: 1px solid #8a8a8a;
  border-radius: 8px;
  background: #e8e8e8;
`

const StatusBar = styled.footer`
  display: flex;
  align-items: center;
  flex: none;
  height: 34px;
  padding: 0 18px 0 15px;
`

const Stats = styled.span`
  color: #666;
  font-size: 16px;
  white-space: pre;
`

const ViewButton = styled.button`
  display: grid;
  place-items: center;
  width: 29px;
  height: 30px;
  margin-right: ${({ $after = 3 }) => $after}px;
  border-radius: 3px;
  background: ${({ $on }) => ($on ? '#bababa' : 'none')};
`

const ZoomText = styled.button`
  display: flex;
  align-items: center;
  gap: 7px;
  width: 66px;
`

const ZoomSlider = styled.input`
  appearance: none;
  width: 172px;
  height: 16px;
  margin: 0 15px;
  background:
    linear-gradient(#666, #666) 85px 50% / 1px 6px no-repeat,
    linear-gradient(90deg, #666 50%, #b4b4b4 50%) 0 50% / 100% 1px no-repeat;

  &::-webkit-slider-thumb {
    appearance: none;
    width: 16px;
    height: 16px;
    border: 1px solid #555;
    border-radius: 50%;
    background: #e8e8e8;
  }
`

const SheetTabs = () => (
  <SheetBar>
    <SheetNav>
      <Icon w={14} h={16} color='#999'><path d='M2 1v14M12 1L5 8l7 7' /></Icon>
      <Icon w={14} h={16} color='#999'><path d='M11 1L4 8l7 7' /></Icon>
      <Icon w={14} h={16} color='#999'><path d='M3 1l7 7-7 7' /></Icon>
      <Icon w={14} h={16} color='#999'><path d='M12 1v14M2 1l7 7-7 7' /></Icon>
    </SheetNav>
    <SheetTab $active>Sheet1</SheetTab>
    <SheetTab>Sheet2</SheetTab>
    <SheetTab>Sheet3</SheetTab>
    <NewSheet aria-label='新建工作表'>
      <Icon w={16} color='#444c66'><path d='M8 0v16M0 8h16' /></Icon>
    </NewSheet>
    <Spacer />
    <HScroll>
      <Icon w={4} h={12} color='#aaa' sw={1}><path d='M.5 0v12M3.500 0v12' /></Icon>
      <HTrack>
        <ScrollArrow aria-label='向左'>
          <Icon w={5} h={8}><path d='M5 0L0 4l5 4z' fill='#8290b0' stroke='none' /></Icon>
        </ScrollArrow>
        <HThumb />
        <Spacer />
        <ScrollArrow aria-label='向右'>
          <Icon w={5} h={8}><path d='M0 0l5 4-5 4z' fill='#8290b0' stroke='none' /></Icon>
        </ScrollArrow>
      </HTrack>
      <Icon w={4} h={12} color='#aaa' sw={1}><path d='M.5 0v12M3.500 0v12' /></Icon>
    </HScroll>
  </SheetBar>
)

const Status = () => (
  <StatusBar>
    <Icon w={24} h={22}>
      <path d='M9 15H1V2h16M17 9V1h4v8' />
      <Glyph x='8' y='20' size='12' fill={green} weight='600'>JS</Glyph>
    </Icon>
    <Divider $gap={12} $color='#d6d6d6' />
    <Stats>平均值=5.5  计数=70  求和=55</Stats>
    <Spacer />
    <Icon w={22}>
      <path d='M1 12c5-8 15-8 20 0-5 8-15 8-20 0zM11 0v3M2 2l3 3M20 2l-3 3' />
      <circle cx='11' cy='12' r='3.500' />
    </Icon>
    <Gap $width={7} />
    <Split label='阅读模式'>
      <Icon w={21}>
        <path d='M7 1h7v18H7zM1 7h19v6H1z' />
      </Icon>
    </Split>
    <Divider $gap={5} $color='#d6d6d6' />
    <Gap $width={6} />
    <ViewButton $on aria-label='普通视图'>
      <Icon h={18}>
        <path d='M1 1h18v15H1zM1 6h18M1 11h18M7 1v15M13 1v15' />
      </Icon>
    </ViewButton>
    <ViewButton aria-label='页面布局视图'>
      <Icon><path d='M1 1h18v18H1zM4 4h12v12H4zM10 4v12' /></Icon>
    </ViewButton>
    <ViewButton $after={10} aria-label='分页预览'>
      <Icon><path d='M1 1h18v17H1zM7 1v10M13 1v10H1' /></Icon>
    </ViewButton>
    <Divider $color='#d6d6d6' />
    <Gap $width={12} />
    <ZoomText>145%<Caret /></ZoomText>
    <Icon w={12} color='#3c4765' sw={3}><path d='M0 6h12' /></Icon>
    <ZoomSlider type='range' min='0' max='100' defaultValue='57' aria-label='缩放' />
    <Icon w={12} color='#3c4765' sw={3}><path d='M0 6h12M6 0v12' /></Icon>
    <Gap $width={15} />
    <Icon>
      <path d='M1 7V1h6M1 1l6 6M13 1h6v6M19 1l-6 6M1 13v6h6M1 19l6-6M19 13v6h-6M19 19l-6-6' />
    </Icon>
  </StatusBar>
)

/* ---------- context menu ---------- */

const Popup = styled.div`
  position: absolute;
  top: ${({ $top }) => $top}px;
  left: ${({ $left }) => $left}px;
  width: ${({ $width }) => $width}px;
  background: #fff;
  box-shadow: 0 0 3px rgba(0, 0, 30, 0.35);
`

const MenuGroup = styled.div`
  padding: ${({ $pad }) => $pad};

  & + & {
    border-top: 1px solid #e4e4e4;
  }
`

const MenuItem = styled.button`
  display: flex;
  align-items: center;
  width: 100%;
  height: ${({ $height = 33 }) => $height}px;
  padding: 0 ${({ $arrow }) => ($arrow ? 9 : 16)}px 2px 10px;
  background: ${({ $on }) => ($on ? '#e5e5e5' : 'none')};
  color: ${({ $muted }) => ($muted ? '#b4b4b4' : '#333')};
  white-space: nowrap;
`

const MenuIcon = styled.span`
  display: grid;
  place-items: center start;
  width: ${({ $narrow }) => ($narrow ? 28 : 30)}px;
`

const Shortcut = styled.kbd`
  color: #777;
  font-family: ${uiFont};
  font-size: 16px;
`

const RightCaret = styled.span`
  width: 4px;
  height: 8px;
  margin-left: 11px;
  background: #8a8a8a;
  clip-path: polygon(0 0, 100% 50%, 0 100%);
`

const Entry = ({ icon, label, keys, arrow, split, on, muted, height, children }) => (
  <MenuItem role='menuitem' $arrow={arrow} $on={on} $muted={muted} $height={height}>
    <MenuIcon $narrow={arrow}>{icon}</MenuIcon>
    {label}
    {children}
    <Spacer />
    {keys && <Shortcut>{keys}</Shortcut>}
    {split && <Divider $height={13} $color='#dcdcdc' />}
    {arrow && <RightCaret />}
  </MenuItem>
)

const CrownIcon = () => (
  <Icon w={16} h={13}>
    <path d='M0 3l4 3 4-6 4 6 4-3-2 10H2z' fill='#ffbe6e' stroke='none' />
  </Icon>
)

const Crown = styled.span`
  margin-left: 11px;
`

const FormatEntry = styled.span`
  display: flex;
  align-items: center;
  gap: 13px;
  margin-right: -10px;
`

const ContextMenu = () => (
  <Popup role='menu' $top={125} $left={487} $width={300}>
    <MenuGroup $pad='0 0 3px'>
      <Entry icon={<CopyIcon />} label='复制(C)' keys='Ctrl+C' />
      <Entry icon={<CutIcon />} label='剪切(T)' keys='Ctrl+X' />
      <Entry icon={<PasteIcon small />} label='粘贴(P)' muted />
      <Entry icon={<PasteSpecialIcon />} label='选择性粘贴(S)...' muted />
    </MenuGroup>
    <MenuGroup $pad='6px 0 5px'>
      <MenuItem role='menuitem'>
        <MenuIcon><BrushIcon w={18} h={20} /></MenuIcon>
        格式刷(F)
        <Spacer />
        <FormatEntry>
          <Divider $height={17} $color='#dcdcdc' />
          <DoubleBrushIcon />
        </FormatEntry>
      </MenuItem>
    </MenuGroup>
    <MenuGroup $pad='4px 0'>
      <Entry icon={<InsertIcon />} label='插入(I)' arrow />
      <Entry label='删除(D)' arrow />
      <Entry icon={<ClearIcon />} label='清除内容(N)' arrow on />
    </MenuGroup>
    <MenuGroup $pad='5px 0'>
      <Entry icon={<FilterIcon w={18} h={18} />} label='筛选(L)' arrow split />
      <Entry icon={<SortIcon w={18} h={18} />} label='排序(U)' arrow split />
    </MenuGroup>
    <MenuGroup $pad='4px 0 3px'>
      <Entry icon={<CommentIcon />} label='插入批注(M)' keys='Shift+F2' />
    </MenuGroup>
    <MenuGroup $pad='5px 0 3px'>
      <Entry label='从下拉列表中选择(K)...' height={32} />
      <Entry label='定义名称(A)...' height={32} />
      <Entry icon={<LinkIcon />} label='超链接(H)...' keys='Ctrl+K' height={32} />
      <Entry icon={<FormatCellsIcon />} label='设置单元格格式(F)...' keys='Ctrl+1' height={32} />
    </MenuGroup>
    <MenuGroup $pad='5px 0 0'>
      <Entry label='批量处理单元格(P)' height={32}>
        <Crown><CrownIcon /></Crown>
      </Entry>
    </MenuGroup>
  </Popup>
)

const ClearMenu = () => (
  <Popup role='menu' $top={377} $left={788} $width={161}>
    <Entry icon={<EraseIcon kind='box' />} label='全部(A)' height={32} />
    <Entry icon={<EraseIcon kind='format' />} label='格式(F)' height={32} on />
    <Entry icon={<EraseIcon kind='text' />} label='内容(C)' height={32} />
    <Entry icon={<EraseIcon kind='note' muted />} label='批注(M)' height={32} muted />
    <Entry icon={<EraseIcon kind='hash' />} label='特殊字符(U)' height={33} arrow split />
  </Popup>
)

/* ---------- floating toolbar ---------- */

const MiniBar = styled(Popup)`
  display: flex;
  gap: 10px;
  height: 63px;
  padding: 1px 8px 0 1px;
`

const MiniRow = styled(ToolRow)`
  height: 30px;
`

const AlignSplit = styled.button`
  display: flex;
  align-items: center;
  justify-content: space-between;
  flex: none;
  width: 37px;
  height: 28px;
  margin-right: 5px;
  padding: 0 2px 0 3px;
  border: 1px solid #c4c4c4;
  border-radius: 5px;
  background: linear-gradient(90deg, #c4c4c4 26px, #fff 26px);
`

const MiniBig = styled.button`
  display: flex;
  flex-direction: column;
  align-items: center;
  gap: 5px;
  padding-top: 5px;
`

const MiniToolbar = () => (
  <MiniBar $top={724} $left={491} $width={379}>
    <div>
      <MiniRow $gap={4}>
        <FontFields square name='DINAlterna' left={3} widths={[97, 83]} />
        <FontSizeIcon />
        <FontSizeIcon minus />
      </MiniRow>
      <MiniRow>
        <ToolButton $on aria-label='自动换行'><WrapIcon w={20} h={19} /></ToolButton>
        <ToolButton aria-label='加粗'><Letter>B</Letter></ToolButton>
        <Gap $width={3} />
        <Split label='填充颜色'><FillIcon /></Split>
        <Split label='字体颜色' width={34}><FontColorIcon /></Split>
        <AlignSplit aria-label='居中对齐'>
          <LinesIcon rows={[[5, 2, 10], [1, 7, 18], [5, 12, 10], [1, 17, 18]]} />
          <Caret />
        </AlignSplit>
        <Split label='边框'><BordersIcon /></Split>
        <BrushIcon w={18} h={20} />
      </MiniRow>
    </div>
    <Divider $height={57} $color='#dcdcdc' />
    <MiniBig>
      <MergeIcon />
      <Label>合并<Caret /></Label>
    </MiniBig>
    <MiniBig>
      <SumIcon />
      <Label>自动求和<Caret /></Label>
    </MiniBig>
  </MiniBar>
)

/* ---------- taskbar ---------- */

const Taskbar = styled.div`
  position: relative;
  display: flex;
  flex: none;
  height: 50px;
  background: linear-gradient(
    90deg,
    #2a2e38 0 25%,
    #3a2e32 27%,
    #15171c 35%,
    #2c2e31 41%,
    #303434 58%,
    #14161d 64%,
    #14161d 70%,
    #38282f 76%,
    #38282f 80%,
    #332f2d 88%,
    #2c2c2c
  );
  color: #fff;
`

const StartButton = styled.button`
  display: grid;
  place-items: center;
  width: 60px;
`

const SearchBox = styled.label`
  display: flex;
  align-items: center;
  gap: 12px;
  width: 430px;
  padding: 0 17px 0 12px;
  border-top: 1px solid #aaa;
  background: #f2f2f2;

  input {
    flex: 1;
    min-width: 0;
    font-size: 19px;
    line-height: 28px;
  }

  input::placeholder {
    color: #222;
    opacity: 1;
  }
`

const Ring = styled.span`
  width: 26px;
  height: 26px;
  border: 4px solid #000;
  border-radius: 50%;
`

const TaskButton = styled.button`
  display: grid;
  place-items: center;
  width: 56px;
  margin-right: 6px;
  border-bottom: 3px solid ${({ $running }) => ($running ? '#6262d4' : 'transparent')};
  padding-top: 2px;
  background: ${({ $on }) => ($on ? '#505256' : 'none')};
  background-clip: padding-box;
`

const TaskButtons = styled.div`
  display: flex;
  padding-left: 6px;
`

const Music = styled.span`
  display: grid;
  place-items: center;
  width: 30px;
  height: 30px;
  border-radius: 6px;
  background: #e8230a;
`

const WorkIcon = styled.span`
  display: grid;
  grid-template-columns: 13px 8px 7px;
  grid-template-rows: 15px 6px 8px;
  width: 28px;
  height: 29px;

  & > b {
    grid-area: 1 / 1 / 3 / 3;
    border-radius: 3px;
    background: #f0330f;
    font-size: 10px;
    line-height: 20px;
    text-align: center;
  }

  & > i {
    grid-area: 2 / 2 / 4 / 4;
    border-radius: 2px;
    background: ${({ $color }) => $color};
    font-size: 11px;
    font-style: normal;
    line-height: 14px;
    text-align: center;
  }
`

const Tray = styled.div`
  display: flex;
  align-items: center;
  padding-right: 30px;
`

const Ime = styled.button`
  width: 18px;
  margin: 0 14px 4px 10px;
  font-size: 18px;
`

const Clock = styled.time`
  display: flex;
  flex-direction: column;
  align-items: center;
  gap: 4px;
  width: 76px;
  margin: 0 23px 2px 0;
  white-space: nowrap;
`

const Watermark = styled.span`
  position: absolute;
  right: 9px;
  bottom: 8px;
  color: rgba(205, 205, 205, 0.85);
  font-family: 'Liberation Sans', sans-serif;
  font-size: 16px;
  line-height: 22px;
`

const WindowsTaskbar = () => (
  <Taskbar>
    <StartButton aria-label='开始菜单'>
      <Icon w={22} h={22}>
        <path
          d='M1 4l8-1v8H1zM10 3l11-2v10H10zM1 12h8v8l-8-1zM10 12h11v9l-11-1z'
          fill='#fff'
          stroke='none'
        />
      </Icon>
    </StartButton>
    <SearchBox>
      <Ring />
      <input aria-label='搜索' placeholder='在这里输入你要搜索的内容' />
      <Icon w={16} h={22} color='#222' sw={1.6}>
        <path d='M5 1h6v13H5zM2 10v7h12v-7M8 17v4M4 21h8' />
      </Icon>
    </SearchBox>
    <TaskButtons>
      <TaskButton aria-label='文件资源管理器'>
        <Icon w={28} h={24}>
          <path d='M1 1h11v4h15v18H1z' fill='#ffe08a' stroke='none' />
          <path d='M1 1h11v4H1z' fill='#f2b632' stroke='none' />
          <path d='M6 23V13h17v10h-5v-5h-7v5z' fill='#35b0e6' stroke='none' />
        </Icon>
      </TaskButton>
      <TaskButton aria-label='浏览器'>
        <Icon w={30} h={28}>
          <circle cx='15' cy='14' r='12' fill='#4db92c' stroke='#e4f5dc' strokeWidth='2' />
          <path d='M8 15h14c0-9-13-10-14-1 0 9 10 9 13 4' stroke='#fff' strokeWidth='3' />
          <path d='M3 27C1 18 16 1 27 2' stroke='#4db92c' strokeWidth='2' />
        </Icon>
      </TaskButton>
      <TaskButton $running aria-label='音乐'>
        <Music>
          <Icon w={22} color='#fff' sw={2}>
            <path d='M16 2c-4-2-6 1-5 4l2 7c0 4-5 3-4-1 1-4 9-4 9 2 0 8-14 8-14-1 0-4 2-6 5-7' />
          </Icon>
        </Music>
      </TaskButton>
      <TaskButton $running aria-label='WPS 文字'>
        <WorkIcon $color='#5b92ee'><b>工作</b><i>W</i></WorkIcon>
      </TaskButton>
      <TaskButton $running $on aria-label='WPS 表格'>
        <WorkIcon $color='#4fb858'><b>工作</b><i>S</i></WorkIcon>
      </TaskButton>
    </TaskButtons>
    <Spacer />
    <Tray>
      <Icon w={18} h={12} color='#fff'><path d='M1 10l8-8 8 8' /></Icon>
      <Gap $width={11} />
      <Icon w={18} h={20}>
        <ellipse cx='9' cy='10' rx='6.500' ry='9.500' fill='#0b0b0b' stroke='none' />
        <ellipse cx='9' cy='14' rx='4.500' ry='4.500' fill='#fff' stroke='none' />
        <circle cx='7' cy='5' r='1.500' fill='#fff' stroke='none' />
        <circle cx='11' cy='5' r='1.500' fill='#fff' stroke='none' />
        <path d='M2 9h14v3H7v4H4v-4H2z' fill='#e2201c' stroke='none' />
        <path d='M6 8h6M3 19h5M10 19h5' stroke='#f5a623' strokeWidth='2' />
      </Icon>
      <Gap $width={9} />
      <Icon w={22} h={18}>
        <ellipse cx='9' cy='7' rx='8.500' ry='7' fill='#7ed348' stroke='none' />
        <ellipse cx='15' cy='12' rx='6.500' ry='5.500' fill='#eee' stroke='none' />
        <path d='M6 5h1M11 5h1' stroke='#2d6b12' strokeWidth='2' />
      </Icon>
      <Ime>英</Ime>
      <Clock>
        <span>15:14</span>
        <span>2021/6/12</span>
      </Clock>
      <Icon w={21} h={22} color='#fff' sw={1.5}>
        <path d='M1 1h19v16h-6l-4 4v-4H1z' />
      </Icon>
    </Tray>
    <Watermark>https://blog.csdn.net/CUBE_lotus</Watermark>
  </Taskbar>
)

const App = () => (
  <>
    <GlobalStyle />
    <Window>
      <TitleTabs />
      <MainMenu />
      <Ribbon />
      <FormulaBar>
        <NameBox>
          <input aria-label='名称框' defaultValue='A1' />
          <Caret />
        </NameBox>
        <FormulaTools>
          <Icon w={21} color='#56617c'>
            <circle cx='9' cy='9' r='8' />
            <path d='M15 15l5 5M6 7h6M6 11h6' />
          </Icon>
          <Fx aria-label='插入函数'>fx</Fx>
        </FormulaTools>
        <FormulaInput aria-label='编辑栏' defaultValue='1' />
      </FormulaBar>
      <Spreadsheet />
      <SheetTabs />
      <Status />
      <WindowsTaskbar />
      <MiniToolbar />
      <ContextMenu />
      <ClearMenu />
    </Window>
  </>
)

export default App
